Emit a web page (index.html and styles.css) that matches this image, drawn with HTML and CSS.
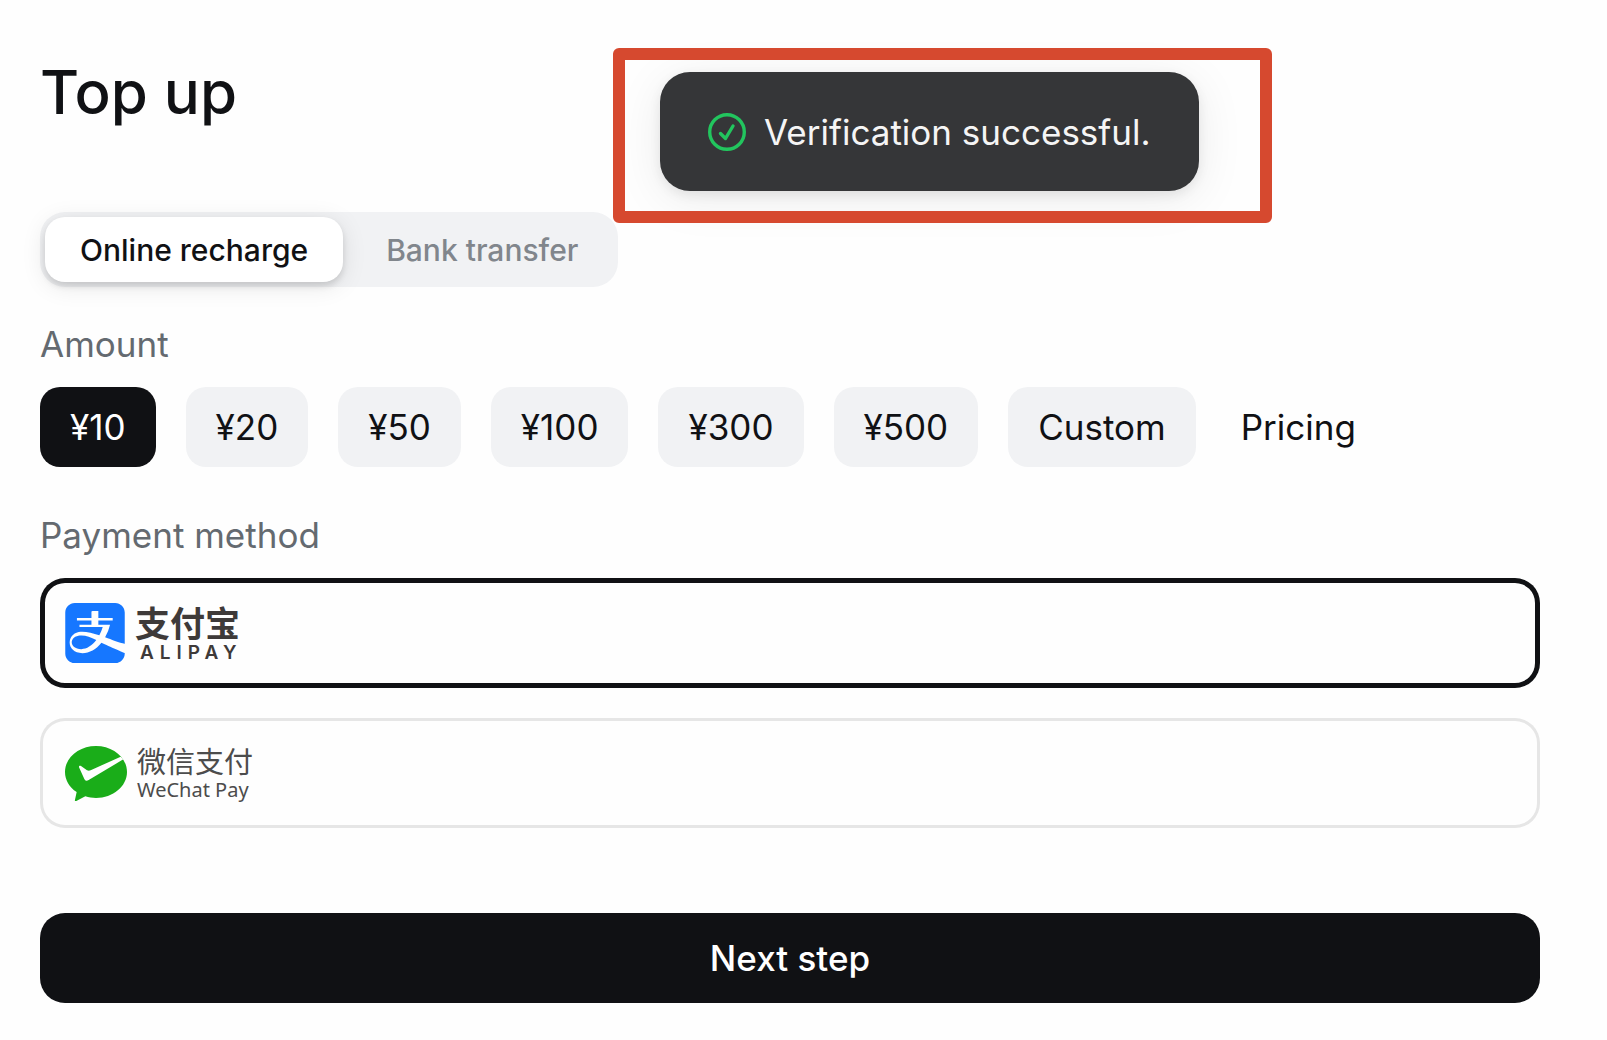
FILE: index.html
```html
<!DOCTYPE html>
<html lang="en">
<head>
  <meta charset="UTF-8">
  <meta name="viewport" content="width=device-width, initial-scale=1.0">
  <title>Top up</title>
  <link rel="stylesheet" href="styles.css">
</head>
<body>
  <main class="page">
    <h1 class="title">Top up</h1>

    <div class="tabs" role="tablist">
      <button class="tab active" type="button" role="tab" aria-selected="true">Online recharge</button>
      <button class="tab" type="button" role="tab" aria-selected="false">Bank transfer</button>
    </div>

    <h2 class="label">Amount</h2>
    <div class="amounts">
      <button class="amount selected" type="button">¥10</button>
      <button class="amount" type="button">¥20</button>
      <button class="amount" type="button">¥50</button>
      <button class="amount" type="button">¥100</button>
      <button class="amount" type="button">¥300</button>
      <button class="amount" type="button">¥500</button>
      <button class="amount" type="button">Custom</button>
      <a class="pricing" href="#">Pricing</a>
    </div>

    <h2 class="label">Payment method</h2>
    <div class="methods">
      <label class="method" for="alipay">
        <input type="radio" id="alipay" name="method" checked>
        <svg class="logo" viewBox="0.1 0 23.8 24" aria-hidden="true">
          <path fill="#1677ff" d="M19.695 15.07c3.426 1.158 4.203 1.22 4.203 1.22V3.846c0-2.124-1.705-3.845-3.81-3.845H3.914C1.808.001.102 1.722.102 3.846v16.31c0 2.123 1.706 3.845 3.813 3.845h16.173c2.105 0 3.81-1.722 3.81-3.845v-.157s-6.19-2.602-9.315-4.119c-2.096 2.602-4.8 4.181-7.607 4.181-4.75 0-6.361-4.19-4.112-6.949.49-.602 1.324-1.175 2.617-1.497 2.025-.502 5.247.313 8.266 1.317a16.796 16.796 0 0 0 1.341-3.302H5.781v-.952h4.799V6.975H4.77v-.953h5.81V3.591s0-.409.411-.409h2.347v2.84h5.744v.951h-5.744v1.704h4.69a19.453 19.453 0 0 1-1.986 5.06c1.424.52 2.702 1.011 3.654 1.333m-13.81-2.032c-.596.06-1.71.325-2.321.869-1.83 1.608-.735 4.55 2.968 4.55 2.151 0 4.301-1.388 5.99-3.61-2.403-1.182-4.438-2.028-6.637-1.809"/>
        </svg>
        <span class="brand alipay">
          <span class="brand-cn" lang="zh-CN">支付宝</span>
          <span class="brand-en">ALIPAY</span>
        </span>
      </label>

      <label class="method" for="wechat">
        <input type="radio" id="wechat" name="method">
        <svg class="logo wechat-logo" viewBox="105 120 186 165" aria-hidden="true">
          <path fill="#1aad19" d="M198 120c51 0 93 35 93 78s-42 78-93 78c-11 0-22-2-32-5l-27 14c-4 2-5 0-4-4l5-23c-22-14-35-36-35-60 0-43 42-78 93-78z"/>
          <path fill="#fff" d="M147 184c-1-4 2-6 6-4l18 13c4 2 7 2 11 0l90-41 8 8-104 62c-6 4-10 3-13-3z"/>
        </svg>
        <span class="brand wechat">
          <span class="brand-cn" lang="zh-CN">微信支付</span>
          <span class="brand-en">WeChat Pay</span>
        </span>
      </label>
    </div>

    <button class="next" type="button">Next step</button>
  </main>

  <div class="toast" role="status">
    <svg class="toast-icon" viewBox="0 0 38 38" fill="none" stroke="#22c55e" stroke-width="3.4" stroke-linecap="round" stroke-linejoin="round" aria-hidden="true">
      <circle cx="19" cy="19" r="17.3"/>
      <path d="M12.500 20.500l5 5 7.500-12.500"/>
    </svg>
    <span>Verification successful.</span>
  </div>
  <div class="highlight"></div>
</body>
</html>
```

FILE: styles.css
```css
* {
  box-sizing: border-box;
}

body {
  margin: 0;
  background-color: #fefefe;
  color: #101114;
  font-family: Inter, "Noto Sans CJK SC", sans-serif;
  font-size: 35px;
  line-height: 50px;
}

button {
  border: none;
  font: inherit;
  color: inherit;
  cursor: pointer;
}

.page {
  padding: 52px 67px 38px 40px;
}

.title {
  margin: 0 0 80px;
  font-size: 60px;
  font-weight: 500;
  line-height: 80px;
}

.tabs {
  display: inline-flex;
  gap: 8px;
  padding: 5px;
  border-radius: 25px;
  background-color: #f1f2f4;
}

.tab {
  height: 65px;
  padding: 0 35px;
  border-radius: 20px;
  background: none;
  color: #81868c;
  font-size: 30px;
  font-weight: 500;
}

.tab.active {
  background-color: white;
  color: #101114;
  box-shadow: 0 4px 6px rgba(0, 0, 0, 0.12), 0 4px 24px rgba(0, 0, 0, 0.1);
}

.label {
  margin: 0 0 18px;
  color: #646a70;
  font-size: 35px;
  font-weight: 400;
}

.tabs + .label {
  margin-top: 32px;
}

.amounts {
  display: flex;
  flex-wrap: wrap;
  align-items: center;
  gap: 30px;
  margin-bottom: 43px;
}

.amount {
  height: 80px;
  padding: 0 30px;
  border-radius: 20px;
  background-color: #f1f2f4;
}

.amount.selected {
  background-color: #101114;
  color: white;
}

.pricing {
  padding: 0 15px;
  color: inherit;
  text-decoration: none;
}

.methods {
  display: grid;
  gap: 30px;
  margin-bottom: 85px;
}

.method {
  position: relative;
  display: flex;
  align-items: center;
  gap: 10px;
  height: 110px;
  padding: 0 25px;
  border-radius: 25px;
  box-shadow: inset 0 0 0 3px #e6e6e6;
  cursor: pointer;
}

.method:has(input:checked) {
  box-shadow: inset 0 0 0 5px #101114;
}

.method input {
  position: absolute;
  opacity: 0;
}

.logo {
  width: 60px;
  height: 60px;
}

.wechat-logo {
  width: 62px;
  height: 55px;
}

.brand {
  display: flex;
  flex-direction: column;
  padding-top: 4px;
}

.brand-cn {
  font-family: "Liberation Sans", "Noto Sans CJK SC", sans-serif;
}

.alipay {
  color: #3e3a39;
}

.alipay .brand-cn {
  font-size: 35px;
  font-weight: 700;
  line-height: 36px;
}

.alipay .brand-en {
  padding-left: 5px;
  font-size: 19px;
  font-weight: 600;
  line-height: 20px;
  letter-spacing: 6px;
}

.wechat {
  color: #4c4c4c;
}

.wechat .brand-cn {
  font-size: 29px;
  line-height: 30px;
}

.wechat .brand-en {
  font-family: "Noto Sans", sans-serif;
  font-size: 20px;
  line-height: 24px;
}

.next {
  width: 100%;
  height: 90px;
  border-radius: 25px;
  background-color: #101114;
  color: white;
  font-weight: 500;
}

.toast {
  position: absolute;
  top: 72px;
  left: 660px;
  display: flex;
  align-items: center;
  gap: 18px;
  height: 119px;
  padding: 0 48px;
  border-radius: 30px;
  background-color: #353638;
  color: #f5f5f5;
  white-space: nowrap;
  box-shadow: 0 4px 12px rgba(0, 0, 0, 0.08), 0 8px 48px rgba(0, 0, 0, 0.08);
}

.toast-icon {
  width: 38px;
  height: 38px;
}

.highlight {
  position: absolute;
  top: 48px;
  left: 613px;
  width: 659px;
  height: 175px;
  border: 12px solid #d6492f;
  border-radius: 6px;
  pointer-events: none;
}
```
